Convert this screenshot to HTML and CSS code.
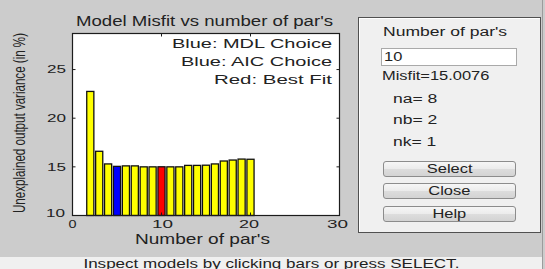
FILE: index.html
```html
<!DOCTYPE html>
<html lang="en">
<head>
    <meta charset="UTF-8">
    <meta name="viewport" content="width=device-width, initial-scale=1.0">
    <title>Model Misfit vs number of par's</title>
    <link rel="stylesheet" href="styles.css">
</head>
<body>
    <div class="window">
        <div class="figure">
            <svg class="plot" width="350" height="257" viewBox="0 0 350 257">
                <text class="title" x="76" y="26" textLength="257" lengthAdjust="spacingAndGlyphs">Model Misfit vs number of par's</text>
                <rect class="axes-bg" x="72.5" y="33.5" width="267" height="182"/>

                <g class="bars">
                    <rect class="bar" x="86.74" y="91.44" width="7.12" height="124.06"/>
                    <rect class="bar" x="95.64" y="151.28" width="7.12" height="64.22"/>
                    <rect class="bar" x="104.54" y="163.93" width="7.12" height="51.57"/>
                    <rect class="bar mdl" x="113.44" y="166.36" width="7.12" height="49.14"/>
                    <rect class="bar" x="122.34" y="165.88" width="7.12" height="49.62"/>
                    <rect class="bar" x="131.24" y="165.88" width="7.12" height="49.62"/>
                    <rect class="bar" x="140.14" y="166.85" width="7.12" height="48.65"/>
                    <rect class="bar" x="149.04" y="166.85" width="7.12" height="48.65"/>
                    <rect class="bar best" x="157.94" y="166.78" width="7.12" height="48.72"/>
                    <rect class="bar" x="166.84" y="166.85" width="7.12" height="48.65"/>
                    <rect class="bar" x="175.74" y="166.85" width="7.12" height="48.65"/>
                    <rect class="bar" x="184.64" y="165.39" width="7.12" height="50.11"/>
                    <rect class="bar" x="193.54" y="165.39" width="7.12" height="50.11"/>
                    <rect class="bar" x="202.44" y="165.2" width="7.12" height="50.3"/>
                    <rect class="bar" x="211.34" y="163.93" width="7.12" height="51.57"/>
                    <rect class="bar" x="220.24" y="161.01" width="7.12" height="54.49"/>
                    <rect class="bar" x="229.14" y="160.04" width="7.12" height="55.46"/>
                    <rect class="bar" x="238.04" y="159.07" width="7.12" height="56.43"/>
                    <rect class="bar" x="246.94" y="159.26" width="7.12" height="56.24"/>
                </g>

                <rect class="axes-box" x="72.5" y="33.5" width="267" height="182"/>
                <path class="ticks" d="M72.5 69.55h3M72.5 118.2h3M72.5 166.85h3M339.5 69.55h-3M339.5 118.2h-3M339.5 166.85h-3M161.5 215.5v-3M250.5 215.5v-3M161.5 33.5v3M250.5 33.5v3"/>

                <!-- legend text -->
                <text class="legend" x="172" y="47.5" textLength="160" lengthAdjust="spacingAndGlyphs">Blue: MDL Choice</text>
                <text class="legend" x="181" y="65.7" textLength="151" lengthAdjust="spacingAndGlyphs">Blue: AIC Choice</text>
                <text class="legend" x="214" y="84" textLength="118" lengthAdjust="spacingAndGlyphs">Red: Best Fit</text>

                <!-- tick labels -->
                <text class="tick y-tick" x="66" y="73" textLength="19" lengthAdjust="spacingAndGlyphs">25</text>
                <text class="tick y-tick" x="66" y="122" textLength="19" lengthAdjust="spacingAndGlyphs">20</text>
                <text class="tick y-tick" x="66" y="170.5" textLength="19" lengthAdjust="spacingAndGlyphs">15</text>
                <text class="tick y-tick" x="65" y="217" textLength="19" lengthAdjust="spacingAndGlyphs">10</text>
                <text class="tick x-tick" x="72.5" y="227.5" textLength="8" lengthAdjust="spacingAndGlyphs">0</text>
                <text class="tick x-tick" x="162.5" y="227.5" textLength="21" lengthAdjust="spacingAndGlyphs">10</text>
                <text class="tick x-tick" x="249" y="227.5" textLength="20" lengthAdjust="spacingAndGlyphs">20</text>
                <text class="tick x-tick" x="337.5" y="227.5" textLength="21" lengthAdjust="spacingAndGlyphs">30</text>

                <text class="axis-label" x="135" y="244" textLength="135" lengthAdjust="spacingAndGlyphs">Number of par's</text>
                <text class="axis-label y-label" transform="translate(25,123) scale(1.35,1) rotate(-90)" textLength="180" lengthAdjust="spacingAndGlyphs">Unexplained output variance (in %)</text>
            </svg>

            <div class="panel">
                <div class="row caption"><span class="txt wide">Number of par's</span></div>
                <div class="edit"><span class="txt">10</span></div>
                <div class="row misfit"><span class="txt">Misfit=15.0076</span></div>
                <div class="row order na"><span class="txt wide">na= 8</span></div>
                <div class="row order nb"><span class="txt wide">nb= 2</span></div>
                <div class="row order nk"><span class="txt wide">nk= 1</span></div>
                <div class="buttons">
                    <button class="btn"><span class="txt">Select</span></button>
                    <button class="btn"><span class="txt">Close</span></button>
                    <button class="btn"><span class="txt">Help</span></button>
                </div>
            </div>
        </div>

        <div class="status"><span class="txt">Inspect models by clicking bars or press SELECT.</span></div>
    </div>
</body>
</html>
```

FILE: styles.css
```css
/* MATLAB-style order selection window */
* {
    box-sizing: border-box;
}

body {
    margin: 0;
    background: #cccccc;
    font-family: "Liberation Sans", Arial, sans-serif;
    color: #222;
    overflow: hidden;
}

.window {
    width: 543px;
    height: 269px;
    border-right: 1px solid #9c9c9c;
}

.figure {
    display: flex;
    align-items: flex-start;
    height: 257px;
}

/* plot */
.plot {
    display: block;
    flex: none;
    font-family: "Liberation Sans", Arial, sans-serif;
}

.plot text {
    fill: #222;
}

.title {
    font-size: 14px;
}

.legend {
    font-size: 13px;
}

.tick {
    font-size: 11.5px;
}

.y-tick {
    text-anchor: end;
}

.x-tick {
    text-anchor: middle;
}

.axis-label {
    font-size: 14px;
}

.y-label {
    font-size: 11.6px;
    text-anchor: middle;
}

.axes-bg {
    fill: #fff;
}

.axes-box {
    fill: none;
    stroke: #1c1c1c;
    stroke-width: 1.2;
}

.ticks {
    fill: none;
    stroke: #1c1c1c;
    stroke-width: 1;
}

.bar {
    fill: #ffff00;
    stroke: #111;
    stroke-width: 1.3;
}

.bar.mdl {
    fill: #0000ff;
}

.bar.best {
    fill: #ff0000;
}

/* side panel */
.panel {
    margin: 17px 0 0 8px;
    width: 183px;
    height: 216px;
    background: #f0f0f0;
    border: 1px solid #505050;
    box-shadow: inset 1px 1px 0 #fff;
    display: flex;
    flex-direction: column;
    align-items: flex-start;
}

.txt {
    display: inline-block;
    white-space: nowrap;
    transform: scaleX(1.37);
    transform-origin: left center;
}

.txt.wide {
    transform: scaleX(1.46);
}

.row {
    font-size: 12px;
    line-height: 14px;
    height: 14px;
}

.caption {
    margin: 7px 0 0 24px;
}

.edit {
    margin: 9px 0 0 22px;
    width: 136px;
    height: 18px;
    padding-left: 2px;
    background: #fff;
    border: 1px solid #a9a9a9;
    font-size: 12px;
    line-height: 16px;
}

.misfit {
    margin: 3px 0 0 23px;
}

.order {
    margin-left: 34px;
}

.na {
    margin-top: 8.5px;
}

.nb {
    margin-top: 7.6px;
}

.nk {
    margin-top: 8.4px;
}

.buttons {
    margin: 11.5px 0 0 24px;
    display: flex;
    flex-direction: column;
    gap: 6.5px;
}

.btn {
    width: 133px;
    height: 16px;
    padding: 0;
    font-family: "Liberation Sans", Arial, sans-serif;
    font-size: 12px;
    line-height: 14px;
    color: #222;
    border: 1px solid #8c8c8c;
    border-radius: 3px;
    background: linear-gradient(#f6f6f6, #ebebeb 50%, #dddddd 50%, #d3d3d3);
}

.btn .txt {
    transform-origin: center;
}

/* status line */
.status {
    height: 12px;
    background: #f0f0f0;
    text-align: center;
    font-size: 12px;
    line-height: 14px;
    overflow: hidden;
}

.status .txt {
    transform: scaleX(1.42);
    transform-origin: center;
}
```
